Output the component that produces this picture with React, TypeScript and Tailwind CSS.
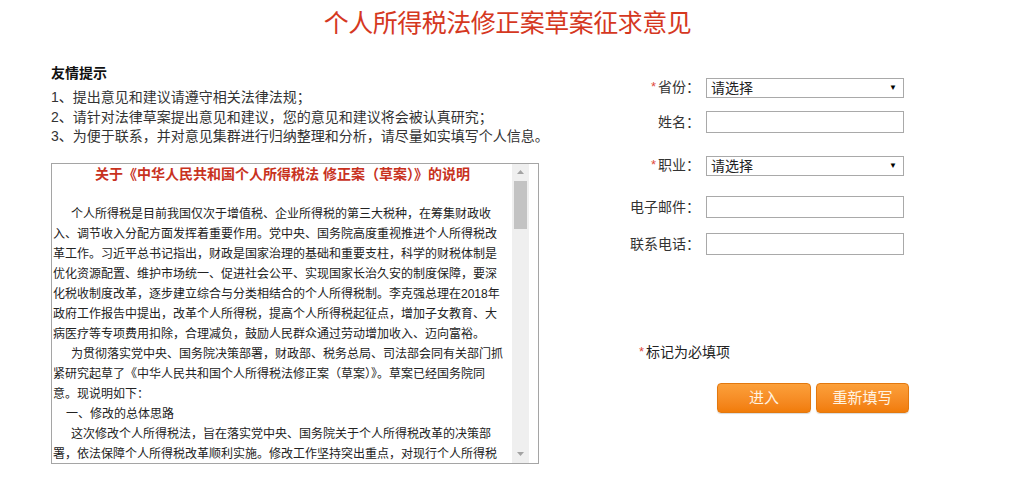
import { ReactNode } from "react";

const tips = [
  "1、提出意见和建议请遵守相关法律法规；",
  "2、请针对法律草案提出意见和建议，您的意见和建议将会被认真研究；",
  "3、为便于联系，并对意见集群进行归纳整理和分析，请尽量如实填写个人信息。",
];

// indent: 0 = none, 1 = paragraph start, 2 = section heading
const bodyLines: [number, string][] = [
  [1, "个人所得税是目前我国仅次于增值税、企业所得税的第三大税种，在筹集财政收"],
  [0, "入、调节收入分配方面发挥着重要作用。党中央、国务院高度重视推进个人所得税改"],
  [0, "革工作。习近平总书记指出，财政是国家治理的基础和重要支柱，科学的财税体制是"],
  [0, "优化资源配置、维护市场统一、促进社会公平、实现国家长治久安的制度保障，要深"],
  [0, "化税收制度改革，逐步建立综合与分类相结合的个人所得税制。李克强总理在2018年"],
  [0, "政府工作报告中提出，改革个人所得税，提高个人所得税起征点，增加子女教育、大"],
  [0, "病医疗等专项费用扣除，合理减负，鼓励人民群众通过劳动增加收入、迈向富裕。"],
  [1, "为贯彻落实党中央、国务院决策部署，财政部、税务总局、司法部会同有关部门抓"],
  [0, "紧研究起草了《中华人民共和国个人所得税法修正案（草案）》。草案已经国务院同"],
  [0, "意。现说明如下："],
  [2, "一、修改的总体思路"],
  [1, "这次修改个人所得税法，旨在落实党中央、国务院关于个人所得税改革的决策部"],
  [0, "署，依法保障个人所得税改革顺利实施。修改工作坚持突出重点，对现行个人所得税"],
];

function Star() {
  return <span className="text-[#e04a3c] text-[13px] mr-[2px] relative top-[-1px]">*</span>;
}

function Row({ label, required, children, className }: { label: string; required?: boolean; children: ReactNode; className?: string }) {
  return (
    <div className={`flex items-center ${className ?? ""}`}>
      <label className="w-[100px] text-right text-[14px] text-[#333] leading-[20px] pr-[1px]">
        {required && <Star />}
        {label}：
      </label>
      <div className="ml-[5px]">{children}</div>
    </div>
  );
}

function FakeSelect() {
  return (
    <div className="w-[198px] h-[20px] border border-[#a9a9a9] bg-white flex items-center justify-between pl-[4px] pr-[6px] text-[14px] text-[#222] leading-none">
      <span>请选择</span>
      <span className="text-[8px] text-black">▼</span>
    </div>
  );
}

function TextInput() {
  return <input type="text" className="block w-[198px] h-[22px] border border-[#a9a9a9] bg-white outline-none px-1 text-[13px]" />;
}

function Arrow({ up }: { up?: boolean }) {
  return (
    <div className="h-[17px] flex items-center justify-center">
      <svg width="7" height="4" viewBox="0 0 7 4">
        <path d={up ? "M0 4 L3.5 0 L7 4 Z" : "M0 0 L3.5 4 L7 0 Z"} fill="#a3a3a3" />
      </svg>
    </div>
  );
}

export default function App() {
  return (
    <div className="w-[1015px] h-[481px] bg-white overflow-hidden font-['Liberation_Sans','Noto_Sans_CJK_SC',sans-serif]">
      <h1 className="pt-[8px] text-center text-[25px] leading-[30px] font-normal text-[#d5381f] tracking-[-0.5px]">
        个人所得税法修正案草案征求意见
      </h1>

      <div className="flex">
        {/* left: tips + explanation box */}
        <div className="ml-[51px] w-[488px]">
          <div className="mt-[25px] text-[14px] font-bold leading-[20px] text-[#111]">友情提示</div>
          <div className="mt-[5px] text-[14px] leading-[19.5px] text-[#333]">
            {tips.map((t) => (
              <div key={t} className="whitespace-nowrap">{t}</div>
            ))}
          </div>

          <div className="mt-[16px] h-[301px] border border-[#a5a5a5] flex bg-white">
            <div className="w-[460px] overflow-hidden pl-[1px] text-[12px] leading-[20px] text-[#222]">
              <div className="text-center text-[14px] font-bold text-[#c8321e] whitespace-nowrap">
                关于《中华人民共和国个人所得税法 修正案（草案）》的说明
              </div>
              <div className="h-[20px]" />
              {bodyLines.map(([indent, text], i) => (
                <div
                  key={i}
                  className={`whitespace-nowrap ${indent === 1 ? "pl-[18px]" : indent === 2 ? "pl-[13px]" : ""}`}
                >
                  {text}
                </div>
              ))}
            </div>
            {/* scrollbar */}
            <div className="w-[17px] bg-[#efefef] flex flex-col">
              <Arrow up />
              <div className="mx-[2px] h-[48px] bg-[#c3c3c3]" />
              <div className="flex-1" />
              <Arrow />
            </div>
            <div className="flex-1" />
          </div>
        </div>

        {/* right: form */}
        <div className="ml-[62px] w-[320px]">
          <Row label="省份" required className="mt-[39px]">
            <FakeSelect />
          </Row>
          <Row label="姓名" className="mt-[13px]">
            <TextInput />
          </Row>
          <Row label="职业" required className="mt-[22px]">
            <FakeSelect />
          </Row>
          <Row label="电子邮件" className="mt-[20px]">
            <TextInput />
          </Row>
          <Row label="联系电话" className="mt-[15px]">
            <TextInput />
          </Row>

          <div className="mt-[87px] ml-[38px] text-[14px] leading-[20px] text-[#222]">
            <Star />
            标记为必填项
          </div>

          <div className="mt-[20px] ml-[116px] flex gap-[5px]">
            <button className="w-[94px] h-[30px] rounded-[4px] border border-[#e3780e] bg-gradient-to-b from-[#fca03a] to-[#f17c08] text-[15px] text-[#fff3e2] shadow-[0_1px_1px_rgba(0,0,0,0.15)]">
              进入
            </button>
            <button className="w-[93px] h-[30px] rounded-[4px] border border-[#e3780e] bg-gradient-to-b from-[#fca03a] to-[#f17c08] text-[15px] text-[#fff3e2] shadow-[0_1px_1px_rgba(0,0,0,0.15)]">
              重新填写
            </button>
          </div>
        </div>
      </div>
    </div>
  );
}
